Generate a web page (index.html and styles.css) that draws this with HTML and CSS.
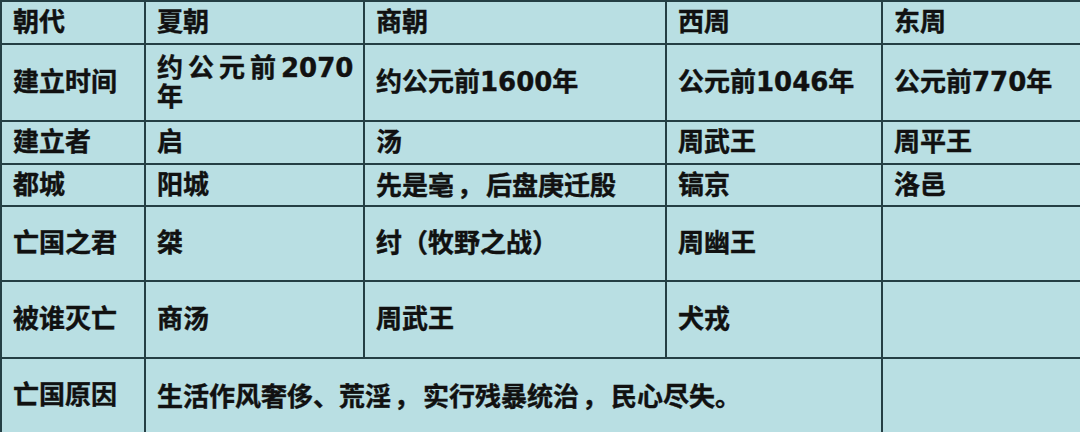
FILE: index.html
```html
<!DOCTYPE html>
<html lang="zh-CN">
<head>
<meta charset="utf-8">
<title>夏商周</title>
<link rel="stylesheet" href="styles.css">
</head>
<body>
<table class="grid">
  <colgroup>
    <col class="c1"><col class="c2"><col class="c3"><col class="c4"><col class="c5">
  </colgroup>
  <tr class="r1"><td>朝代</td><td>夏朝</td><td>商朝</td><td>西周</td><td>东周</td></tr>
  <tr class="r2"><td>建立时间</td><td><span class="spread">约公元前</span>2070<br>年</td><td>约公元前1600年</td><td>公元前1046年</td><td>公元前770年</td></tr>
  <tr class="r3"><td>建立者</td><td>启</td><td>汤</td><td>周武王</td><td>周平王</td></tr>
  <tr class="r4"><td>都城</td><td>阳城</td><td>先是亳<span class="p">，</span>后盘庚迁殷</td><td>镐京</td><td>洛邑</td></tr>
  <tr class="r5"><td>亡国之君</td><td>桀</td><td>纣（牧野之战）</td><td>周幽王</td><td></td></tr>
  <tr class="r6"><td>被谁灭亡</td><td>商汤</td><td>周武王</td><td>犬戎</td><td></td></tr>
  <tr class="r7"><td>亡国原因</td><td colspan="3">生活作风奢侈、荒淫<span class="p">，</span>实行残暴统治<span class="p">，</span>民心尽失。</td><td></td></tr>
</table>
</body>
</html>
```

FILE: styles.css
```css
html, body {
  margin: 0;
  padding: 0;
  background: #b9dfe3;
}
.grid {
  width: 1080px;
  height: 432px;
  border-collapse: collapse;
  table-layout: fixed;
  background: #b9dfe3;
  font-family: "DejaVu Sans", "Noto Sans CJK SC", sans-serif;
  font-weight: bold;
  font-size: 26px;
  color: #111;
  -webkit-text-stroke: 0.4px #111;
}
.c1 { width: 144px; }
.c2 { width: 219px; }
.c3 { width: 302px; }
.c4 { width: 216px; }
.c5 { width: 199px; }
.grid td {
  border: 2px solid #243f44;
  padding: 0 2px 0 11px;
  vertical-align: middle;
  line-height: 29px;
  white-space: nowrap;
}
.spread {
  letter-spacing: 5px;
}
.p {
  font-family: "Noto Sans CJK TC", sans-serif;
  padding: 0 3px;
}
.r1 { height: 43px; }
.r2 { height: 77px; }
.r3 { height: 43px; }
.r4 { height: 42px; }
.r5 { height: 75px; }
.r6 { height: 77px; }
.r7 { height: 75px; }
```
